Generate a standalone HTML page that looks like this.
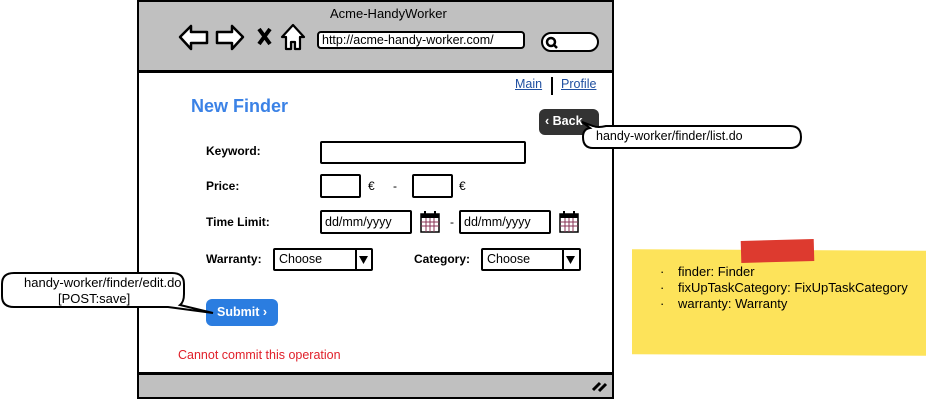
<!DOCTYPE html>
<html><head><meta charset="utf-8"><style>
*{margin:0;padding:0;box-sizing:border-box}
body{width:926px;height:400px;background:#fff;position:relative;overflow:hidden;font-family:"Liberation Sans",sans-serif;color:#000}
.a{position:absolute}
.box{position:absolute;border:2px solid #000;background:#fff;border-radius:2px}
.lbl{position:absolute;font-size:12px;font-weight:bold}
.t{font-size:12px;position:absolute;white-space:nowrap}
</style></head><body>
<div class="a" style="left:137px;top:0;width:477px;height:399px;border:2px solid #000;background:#fff"></div>
<div class="a" style="left:137px;top:0;width:477px;height:73px;border:2px solid #000;border-bottom:3px solid #000;background:#c0c0c0"></div>
<div class="t" style="left:330px;top:6px;font-size:13px">Acme-HandyWorker</div>
<svg class="a" style="left:176px;top:22px" width="135" height="32">
<path d="M4 15 L15 4 L15 10 L31 10 L31 21 L15 21 L15 27 Z" fill="#fff" stroke="#000" stroke-width="2.5" stroke-linejoin="round"/>
<path d="M67 15 L56 4 L56 10 L41 10 L41 21 L56 21 L56 27 Z" fill="#fff" stroke="#000" stroke-width="2.5" stroke-linejoin="round"/>
<path d="M83 7 L94 22 M94 7 L83 22" stroke="#000" stroke-width="4"/>
<path d="M117 3 L106 15 L110 15 L110 27 L115 27 L115 20 L119 20 L119 27 L124 27 L124 15 L128 15 Z" fill="#fff" stroke="#000" stroke-width="2.2" stroke-linejoin="round"/>
</svg>
<div class="box" style="left:317px;top:31px;width:208px;height:18px;border-radius:4px"></div>
<div class="t" style="left:322px;top:33px;font-size:12.5px">http://acme-handy-worker.com/</div>
<div class="box" style="left:541px;top:32px;width:58px;height:20px;border-radius:10px"></div>
<svg class="a" style="left:545px;top:36px" width="14" height="14"><circle cx="6" cy="6" r="4" fill="none" stroke="#000" stroke-width="2.5"/><path d="M9 9 L12 12" stroke="#000" stroke-width="2.5"/></svg>
<div class="t" style="left:515px;top:77px;font-size:12.5px;color:#1f4fa0;text-decoration:underline">Main</div>
<div class="a" style="left:551px;top:77px;width:2px;height:18px;background:#000"></div>
<div class="t" style="left:561px;top:77px;font-size:12.5px;color:#1f4fa0;text-decoration:underline">Profile</div>
<div class="t" style="left:191px;top:96px;font-size:18px;font-weight:bold;color:#3b82e6">New Finder</div>
<div class="a" style="left:539px;top:109px;width:60px;height:26px;background:#333;border-radius:6px"></div>
<div class="t" style="left:545px;top:114px;color:#fff;font-weight:bold;font-size:12.5px">‹ Back</div>
<svg class="a" style="left:578px;top:120px" width="230" height="32"><path d="M15 6 Q20 8 28 6 L212 6 Q223 6 223 17 Q223 28 212 28 L15 28 Q5 28 5 17 Q5 9 12 8 L4 2 Z" fill="#fff" stroke="#000" stroke-width="2"/></svg>
<div class="t" style="left:596px;top:129px;font-size:12.5px">handy-worker/finder/list.do</div>
<div class="lbl" style="left:206px;top:144px">Keyword:</div>
<div class="box" style="left:320px;top:141px;width:206px;height:23px"></div>
<div class="lbl" style="left:206px;top:179px">Price:</div>
<div class="box" style="left:320px;top:174px;width:41px;height:24px"></div>
<div class="t" style="left:368px;top:179px">€</div><div class="t" style="left:393px;top:179px">-</div>
<div class="box" style="left:412px;top:174px;width:41px;height:24px"></div>
<div class="t" style="left:459px;top:179px">€</div>
<div class="lbl" style="left:206px;top:215px">Time Limit:</div>
<div class="box" style="left:320px;top:210px;width:92px;height:24px"></div>
<div class="t" style="left:325px;top:215px;font-size:12.5px">dd/mm/yyyy</div>
<div class="t" style="left:450px;top:215px">-</div>
<div class="box" style="left:459px;top:210px;width:92px;height:24px"></div>
<div class="t" style="left:464px;top:215px;font-size:12.5px">dd/mm/yyyy</div>
<svg class="a" style="left:420px;top:210px" width="20" height="24"><rect x="1" y="4" width="18" height="18" fill="#fff" stroke="#000" stroke-width="1.5"/><rect x="1" y="4" width="18" height="4" fill="#000"/><path d="M1 12H19M1 16H19M6 8V22M10 8V22M14 8V22" stroke="#835" stroke-width="1"/><path d="M5 1V6M15 1V6" stroke="#000" stroke-width="2"/></svg>
<svg class="a" style="left:559px;top:210px" width="20" height="24"><rect x="1" y="4" width="18" height="18" fill="#fff" stroke="#000" stroke-width="1.5"/><rect x="1" y="4" width="18" height="4" fill="#000"/><path d="M1 12H19M1 16H19M6 8V22M10 8V22M14 8V22" stroke="#835" stroke-width="1"/><path d="M5 1V6M15 1V6" stroke="#000" stroke-width="2"/></svg>
<div class="lbl" style="left:206px;top:252px">Warranty:</div>
<div class="box" style="left:273px;top:248px;width:100px;height:23px"></div>
<div class="t" style="left:279px;top:252px;font-size:12.5px">Choose</div>
<div class="a" style="left:355px;top:248px;width:2px;height:23px;background:#000"></div>
<svg class="a" style="left:359px;top:255px" width="10" height="10"><path d="M0 1H9L4.5 9Z"/></svg>
<div class="lbl" style="left:414px;top:252px">Category:</div>
<div class="box" style="left:481px;top:248px;width:100px;height:23px"></div>
<div class="t" style="left:487px;top:252px;font-size:12.5px">Choose</div>
<div class="a" style="left:562px;top:248px;width:2px;height:23px;background:#000"></div>
<svg class="a" style="left:566px;top:255px" width="10" height="10"><path d="M0 1H9L4.5 9Z"/></svg>
<div class="a" style="left:206px;top:299px;width:72px;height:27px;background:#2b7de0;border-radius:6px"></div>
<div class="t" style="left:217px;top:305px;color:#fff;font-weight:bold;font-size:12.5px">Submit ›</div>
<svg class="a" style="left:0;top:270px" width="220" height="46"><path d="M14 3 L172 3 Q184 3 184 14 L184 24 Q184 32 180 35 L213 43 L168 37 L14 37 Q2 37 2 26 L2 14 Q2 3 14 3Z" fill="#fff" stroke="#000" stroke-width="2"/></svg>
<div class="t" style="left:24px;top:275px;font-size:13px">handy-worker/finder/edit.do</div>
<div class="t" style="left:58px;top:291px;font-size:13px">[POST:save]</div>
<div class="t" style="left:178px;top:348px;color:#e0202a;font-size:12.5px">Cannot commit this operation</div>
<div class="a" style="left:137px;top:372px;width:477px;height:27px;background:#c0c0c0;border:2px solid #000;border-top:3px solid #000"></div>
<svg class="a" style="left:590px;top:378px" width="18" height="16"><path d="M3 12L10 5M9 13L16 6" stroke="#000" stroke-width="3"/></svg>
<div class="a" style="left:632px;top:250px;width:294px;height:105px;background:#fde35a;transform:skewY(0.3deg)"></div>
<div class="a" style="left:741px;top:240px;width:73px;height:22px;background:#dd3a2f;transform:rotate(-1.5deg)"></div>
<div class="t" style="left:660px;top:264px;line-height:16px;font-size:13px">·<br>·<br>·</div>
<div class="t" style="left:678px;top:264px;line-height:16px;font-size:13px">finder: Finder<br>fixUpTaskCategory: FixUpTaskCategory<br>warranty: Warranty</div>
</body></html>
